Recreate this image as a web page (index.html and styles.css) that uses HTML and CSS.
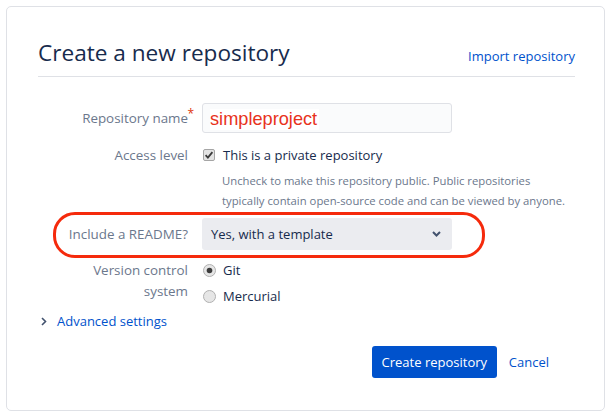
FILE: index.html
```html
<!DOCTYPE html>
<html>
<head>
<meta charset="utf-8">
<link rel="stylesheet" href="styles.css">
</head>
<body>
<div class="card">
  <div class="header">
    <h1 class="title">Create a new repository</h1>
    <a class="link import">Import repository</a>
  </div>
  <div class="form">
    <div class="row row-name">
      <div class="label">Repository name<span class="req">*</span></div>
      <div class="control">
        <div class="input"><span class="input-text">simpleproject</span></div>
      </div>
    </div>
    <div class="row row-access">
      <div class="label">Access level</div>
      <div class="control">
        <div class="check-line">
          <svg class="checkbox" width="12" height="12" viewBox="0 0 12 12"><rect x="0.5" y="0.5" width="11" height="11" rx="1.5" fill="#e3e3e3" stroke="#a5a5a5"/><path d="M2.6 6.2 L4.9 8.6 L9.4 3.2" fill="none" stroke="#3a3a3a" stroke-width="1.8"/></svg>
          <span class="opt">This is a private repository</span>
        </div>
        <p class="help">Uncheck to make this repository public. Public repositories typically contain open-source code and can be viewed by anyone.</p>
      </div>
    </div>
    <div class="row row-readme">
      <div class="label">Include a README?</div>
      <div class="control">
        <div class="select">
          <span>Yes, with a template</span>
          <svg class="chev" width="9" height="6" viewBox="0 0 9 6"><path d="M1 1 L4.5 4.5 L8 1" fill="none" stroke="#42526e" stroke-width="2"/></svg>
        </div>
      </div>
      <div class="highlight"></div>
    </div>
    <div class="row row-vcs">
      <div class="label vcs-label">Version control<br>system</div>
      <div class="control radios">
        <div class="radio-line">
          <svg class="radio" width="13" height="13" viewBox="0 0 13 13"><circle cx="6.5" cy="6.5" r="6" fill="#e6e6e6" stroke="#b0b0b0"/><circle cx="6.5" cy="6.5" r="2.8" fill="#3c3c3c"/></svg>
          <span class="opt">Git</span>
        </div>
        <div class="radio-line">
          <svg class="radio" width="13" height="13" viewBox="0 0 13 13"><circle cx="6.5" cy="6.5" r="6" fill="#e6e6e6" stroke="#b0b0b0"/></svg>
          <span class="opt">Mercurial</span>
        </div>
      </div>
    </div>
  </div>
  <div class="advanced">
    <svg class="adv-chev" width="6" height="9" viewBox="0 0 6 9"><path d="M1 1 L4.5 4.5 L1 8" fill="none" stroke="#42526e" stroke-width="1.6"/></svg>
    <a class="link">Advanced settings</a>
  </div>
  <div class="actions">
    <button class="btn-primary">Create repository</button>
    <a class="link cancel">Cancel</a>
  </div>
</div>
</body>
</html>
```

FILE: styles.css
```css
* { box-sizing: border-box; }
html, body { margin: 0; padding: 0; background: #fff; }
body {
  font-family: "Open Sans", "Noto Sans", sans-serif;
  font-size: 13px;
  color: #172b4d;
}
.card {
  margin: 6px 8px 0 6px;
  height: 405px;
  border: 1px solid #dfe1e6;
  border-radius: 5px;
  padding: 30px 29px 30px 31px;
}
.header {
  display: flex;
  justify-content: space-between;
  align-items: baseline;
  border-bottom: 1px solid #dfe1e6;
  padding-bottom: 7px;
}
.title {
  margin: 0;
  font-size: 22.6px;
  font-weight: 400;
  line-height: 32px;
  color: #172b4d;
}
.link { color: #0052cc; text-decoration: none; font-size: 13px; }
.import { margin-top: 2px; }
.form { margin-top: 26px; }
.row {
  display: grid;
  grid-template-columns: 150px 1fr;
  column-gap: 14px;
  position: relative;
}
.label {
  text-align: right;
  color: #6b778c;
  font-size: 13.4px;
  position: relative;
}
.req {
  position: absolute;
  right: -6px;
  top: -4px;
  color: #de350b;
  font-size: 12px;
}
.row-name .label { line-height: 30px; }
.input {
  width: 250px;
  height: 30px;
  border: 1px solid #dfe1e6;
  border-radius: 3px;
  background: #fafbfc;
  padding: 3px 0 0 7px;
  display: flex;
  align-items: center;
}
.input-text {
  font-family: "Liberation Sans", Arial, sans-serif;
  font-size: 18.2px;
  color: #e8321c;
  background: #fff;
  padding-right: 2px;
}
.row-access { margin-top: 12px; }
.row-access .label { line-height: 20px; }
.check-line { display: flex; align-items: center; height: 20px; }
.checkbox { margin-left: 1px; margin-right: 8px; }
.opt { font-size: 13px; color: #172b4d; }
.help {
  margin: 6px 0 0 20px;
  font-size: 11.3px;
  line-height: 20px;
  color: #6b778c;
  width: 350px;
}
.row-readme { margin-top: 7px; }
.row-readme .label { line-height: 32px; }
.select {
  width: 250px;
  height: 32px;
  background: #ebecf0;
  border-radius: 3px;
  display: flex;
  align-items: center;
  justify-content: space-between;
  padding: 0 11px 0 9px;
  font-size: 13px;
  color: #172b4d;
}
.highlight {
  position: absolute;
  left: 15px;
  top: -6px;
  width: 432px;
  height: 46px;
  border: 3.5px solid #f52a0c;
  border-radius: 22px;
  pointer-events: none;
}
.row-vcs { margin-top: 8px; }
.vcs-label { line-height: 21px; padding-top: 2px; }
.radios { display: flex; flex-direction: column; gap: 2px; }
.radio-line { display: flex; align-items: center; height: 24px; }
.radio { margin-left: 1px; margin-right: 7px; }
.advanced {
  margin-top: 3px;
  display: flex;
  align-items: center;
  height: 20px;
  padding-left: 3px;
}
.adv-chev { margin-right: 10px; }
.actions {
  margin-top: 15px;
  display: flex;
  justify-content: flex-end;
  align-items: center;
  padding-right: 26px;
}
.btn-primary {
  height: 32px;
  width: 125px;
  border: none;
  border-radius: 3px;
  background: #0052cc;
  color: #fff;
  font-family: inherit;
  font-size: 13px;
  padding: 0;
}
.cancel { margin-left: 12px; }
```
